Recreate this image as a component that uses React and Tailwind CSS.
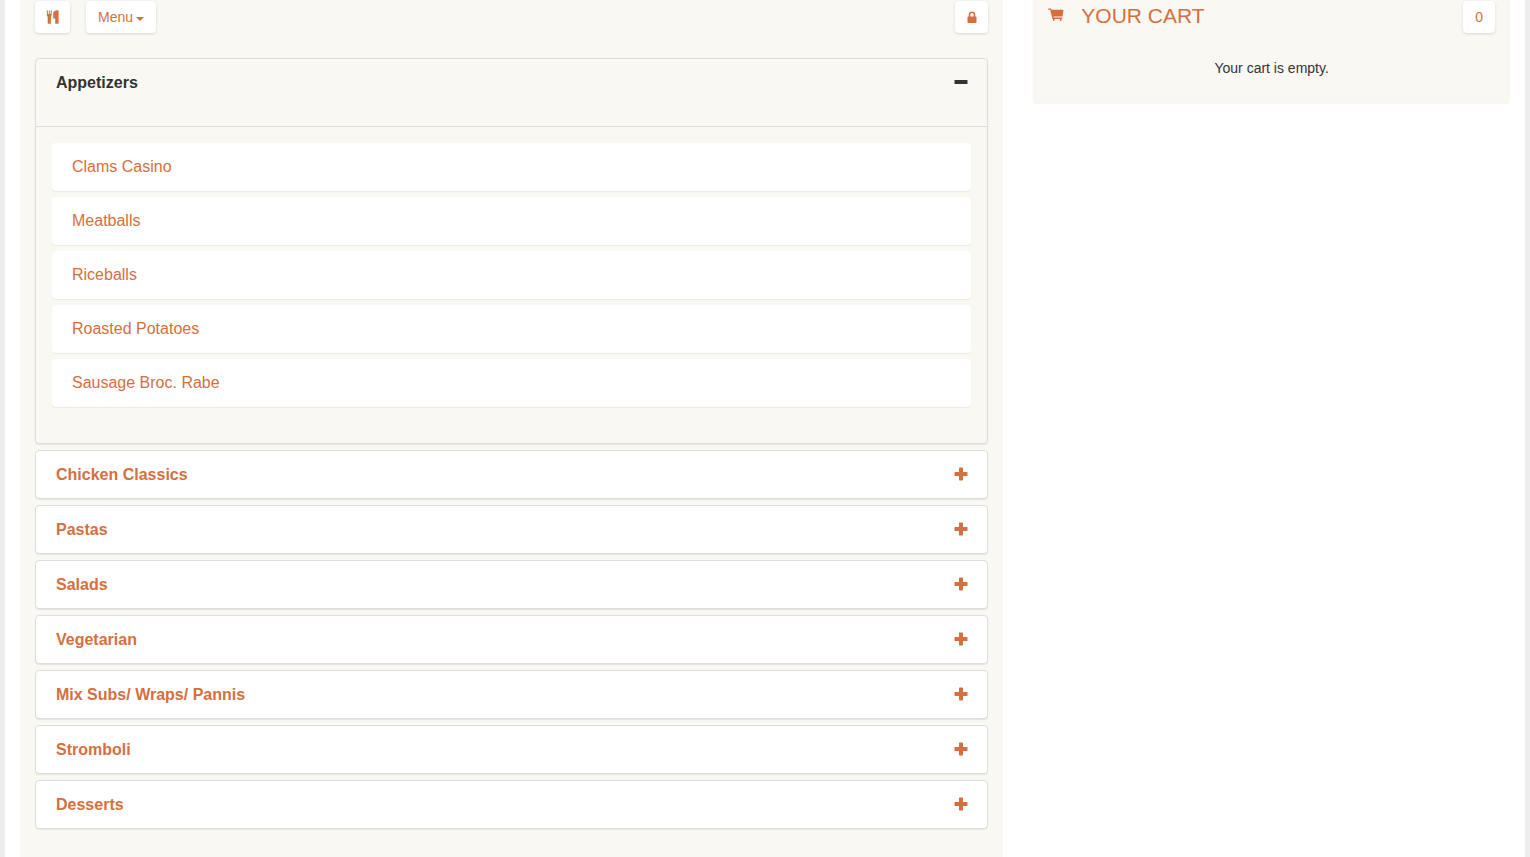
import { useState } from "react";
import clsx from "clsx";

const CATEGORIES = [
  {
    name: "Appetizers",
    items: ["Clams Casino", "Meatballs", "Riceballs", "Roasted Potatoes", "Sausage Broc. Rabe"],
  },
  { name: "Chicken Classics", items: [] },
  { name: "Pastas", items: [] },
  { name: "Salads", items: [] },
  { name: "Vegetarian", items: [] },
  { name: "Mix Subs/ Wraps/ Pannis", items: [] },
  { name: "Stromboli", items: [] },
  { name: "Desserts", items: [] },
];

const ICONS = {
  plus: {
    viewBox: "0 0 14 14",
    path: "M5.6.6h2.8q.6 0 .6.6V5h3.900q.6 0 .6.6v2.8q0 .6-.6.600H9v3.800q0 .6-.6.6H5.600q-.6 0-.6-.6V9H1.100q-.6 0-.6-.6V5.600q0-.6.6-.6H5V1.200q0-.6.600-.6z",
  },
  minus: {
    viewBox: "0 0 14 14",
    path: "M1.100 5h11.800q.6 0 .6.6v2.800q0 .6-.6.600H1.100q-.6 0-.6-.6V5.600q0-.6.6-.6z",
  },
  cart: {
    viewBox: "0 0 16 14",
    path: "M.6.500h2q.5 0 .7.500l.3.700h11.300q.6 0 .5.600l-.7 5.600q-.1.600-.8.600H5.400l.3 1.100h8.100q.5 0 .5.500v.500q0 .400-.5.400h-.3v1.300q0 .600-.8.600t-.8-.6v-1.300H6.600v1.300q0 .600-.8.600t-.8-.6v-1.300q-.5 0-.7-.6L2.200 1.800H.6Q0 1.800 0 1.150T.6.500z",
  },
  lock: {
    viewBox: "0 0 14 14",
    path: "M7 1.400q-1.500 0-2.400.9t-.9 2.400v1.800h-.3q-.9 0-.9.8v4.900q0 .8.900.8h7.200q.9 0 .9-.8V7.300q0-.8-.9-.8h-.3V4.700q0-1.500-.9-2.400T7 1.400zM7 2.900q.8 0 1.200.5t.5 1.300v1.800H5.300V4.700q0-.8.5-1.300T7 2.900z",
  },
  cutlery: {
    viewBox: "0 0 14 14",
    path: "M1.400.2q.5 0 .5.500v3.200h.9V.7q0-.5.500-.5t.5.500v3.200h.9V.7q0-.5.500-.5t.5.500v4.600q0 .900-.8 1.400v6.600q0 .500-.5.500H2.200q-.5 0-.5-.5V6.700Q.9 6.200.9 5.300V.7q0-.5.500-.5zM12 .2q.600 0 .6.600v12.500q0 .500-.5.500H9.700q-.5 0-.5-.5V8.600H7.700q-.5 0-.5-.5V3.400q0-1.500 1.300-2.400T12 .2z",
  },
};

function Icon({ name, className }) {
  return (
    <svg viewBox={ICONS[name].viewBox} fill="currentColor" aria-hidden="true" className={clsx("shrink-0", className)}>
      <path d={ICONS[name].path} />
    </svg>
  );
}

function ToolButton({ className, children, ...props }) {
  return (
    <button
      type="button"
      className={clsx(
        "flex h-8 items-center justify-center rounded-sm bg-white text-sm text-[#d56f3e] shadow-[0_1px_3px_rgba(0,0,0,0.14)]",
        className
      )}
      {...props}
    >
      {children}
    </button>
  );
}

function Category({ category, open, onToggle }) {
  return (
    <section
      className={clsx(
        "rounded-sm border border-[#dddddd] shadow-[0_1px_1px_rgba(0,0,0,0.08)]",
        open ? "bg-[#f9f8f3]" : "bg-white"
      )}
    >
      <h2>
        <button
          type="button"
          aria-expanded={open}
          onClick={onToggle}
          className={clsx(
            "flex w-full items-start justify-between pr-[19px] pl-5 text-left text-base leading-[17px] font-bold",
            open ? "pt-[15px] pb-[35px] text-[#333333]" : "py-[15px] text-[#d56f3e]"
          )}
        >
          {category.name}
          <Icon name={open ? "minus" : "plus"} className="mt-px size-[14px]" />
        </button>
      </h2>
      {open && (
        <ul className="flex flex-col gap-1.5 border-t border-[#dddddd] px-4 pt-4 pb-9">
          {category.items.map((item) => (
            <li key={item}>
              <a
                href="#"
                className="block rounded-sm bg-white px-5 py-[15px] text-base leading-[18px] text-[#d56f3e] shadow-[0_1px_1px_rgba(0,0,0,0.06)]"
              >
                {item}
              </a>
            </li>
          ))}
        </ul>
      )}
    </section>
  );
}

export default function App() {
  const [openName, setOpenName] = useState("Appetizers");

  return (
    <div className="min-h-screen bg-[#eeeeee] px-[5px] font-['Liberation_Sans',Arial,sans-serif] text-sm text-[#333333]">
      <div className="flex min-h-screen items-start bg-white">
        <main className="w-2/3 self-stretch px-[15px]">
          <div className="min-h-screen bg-[#f9f8f3] px-[15px] pt-px pb-7">
            <div className="mb-[25px] flex items-center">
              <ToolButton className="w-[35px]" aria-label="Restaurant">
                <Icon name="cutlery" className="size-[14px]" />
              </ToolButton>
              <ToolButton className="ml-4 gap-[3px] px-3" aria-haspopup="menu">
                Menu
                <svg viewBox="0 0 8 4" fill="currentColor" aria-hidden="true" className="mt-1 h-1 w-2">
                  <path d="M0 0h8L4 4z" />
                </svg>
              </ToolButton>
              <ToolButton className="ml-auto w-[33px]" aria-label="Log in">
                <Icon name="lock" className="size-[14px]" />
              </ToolButton>
            </div>
            <div className="flex flex-col gap-1.5">
              {CATEGORIES.map((category) => (
                <Category
                  key={category.name}
                  category={category}
                  open={openName === category.name}
                  onToggle={() => setOpenName(openName === category.name ? null : category.name)}
                />
              ))}
            </div>
          </div>
        </main>

        <aside className="w-1/3 px-[15px]">
          <div className="rounded-b-sm bg-[#f9f8f3] px-[15px] pt-px pb-[25px] shadow-[0_1px_1px_rgba(0,0,0,0.04)]">
            <div className="flex items-start text-[#d56f3e]">
              <Icon name="cart" className="mt-[7px] h-[14px] w-4" />
              <h1 className="ml-[17px] text-[21px] leading-[30px]">YOUR CART</h1>
              <ToolButton className="ml-auto px-3" aria-label="Items in cart">
                0
              </ToolButton>
            </div>
            <p className="mt-[25px] text-center leading-5">Your cart is empty.</p>
          </div>
        </aside>
      </div>
    </div>
  );
}
